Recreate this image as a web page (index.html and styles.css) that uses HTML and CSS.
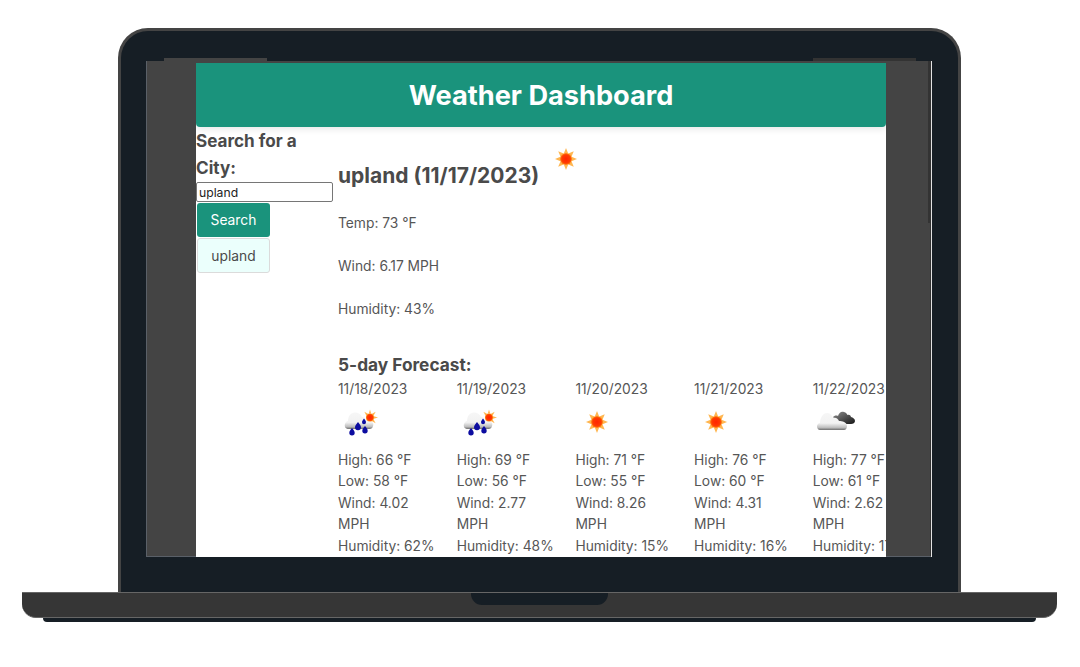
FILE: index.html
```html
<!DOCTYPE html>
<html lang="en">
  <head>
    <meta charset="UTF-8" />
    <title>Weather Dashboard</title>
    <link rel="stylesheet" href="styles.css">
  </head>
  <body>
    <svg class="icon-defs" aria-hidden="true">
      <defs>
        <radialGradient id="sun-disc">
          <stop offset="0" stop-color="#ff2400" />
          <stop offset="0.7" stop-color="#ff3c00" />
          <stop offset="1" stop-color="#ff8c10" />
        </radialGradient>
        <linearGradient id="cloud-white" x1="0" y1="0" x2="0" y2="1">
          <stop offset="0" stop-color="#f6f6f6" />
          <stop offset="0.6" stop-color="#f2f2f2" />
          <stop offset="0.85" stop-color="#c0c0c0" />
          <stop offset="1" stop-color="#6e6e6e" />
        </linearGradient>
        <linearGradient id="cloud-dark" x1="0" y1="0" x2="1" y2="1">
          <stop offset="0" stop-color="#8e8e8e" />
          <stop offset="1" stop-color="#161616" />
        </linearGradient>
        <symbol id="sun" viewBox="0 0 24 24">
          <g fill="#ffb650">
            <polygon points="12,1 9.800,6.500 14.200,6.500" />
            <polygon points="12,1 9.800,6.500 14.200,6.500" transform="rotate(45 12 12)" />
            <polygon points="12,1 9.800,6.500 14.200,6.500" transform="rotate(90 12 12)" />
            <polygon points="12,1 9.800,6.500 14.200,6.500" transform="rotate(135 12 12)" />
            <polygon points="12,1 9.800,6.500 14.200,6.500" transform="rotate(180 12 12)" />
            <polygon points="12,1 9.800,6.500 14.200,6.500" transform="rotate(225 12 12)" />
            <polygon points="12,1 9.800,6.500 14.200,6.500" transform="rotate(270 12 12)" />
            <polygon points="12,1 9.800,6.500 14.200,6.500" transform="rotate(315 12 12)" />
          </g>
          <circle cx="12" cy="12" r="6" fill="url(#sun-disc)" />
        </symbol>
        <symbol id="rain" viewBox="0 0 36 30">
          <g fill="#ffb650">
            <polygon points="26,1.500 24.800,5.500 27.200,5.500" />
            <polygon points="26,1.500 24.800,5.500 27.200,5.500" transform="rotate(45 26 9.500)" />
            <polygon points="26,1.500 24.800,5.500 27.200,5.500" transform="rotate(90 26 9.500)" />
            <polygon points="26,1.500 24.800,5.500 27.200,5.500" transform="rotate(135 26 9.500)" />
            <polygon points="26,1.500 24.800,5.500 27.200,5.500" transform="rotate(180 26 9.500)" />
            <polygon points="26,1.500 24.800,5.500 27.200,5.500" transform="rotate(315 26 9.500)" />
          </g>
          <path d="M5 21c-3 0-5-2-4-5 .500-2 2-3 3-3 0-5 3-8.500 7-8.500 3 0 6 2 7 4.500 2 0 3 1 3.500 2.500 3-.500 6.500 .500 7.500 3.500 1 3-1 6-3 6z" fill="url(#cloud-white)" />
          <circle cx="26" cy="9.500" r="4" fill="url(#sun-disc)" />
          <g fill="#0c0ca0">
            <path d="M8 20c1.500 2 2.700 3.200 2.700 4.700a2.700 2.700 0 0 1-5.400 0c0-1.500 1.200-2.700 2.700-4.700z" />
            <path d="M14 14c1.500 2 3 3.500 3 5.300a3 3 0 0 1-6 0c0-1.800 1.500-3.300 3-5.300z" />
            <path d="M20 10.500c1 1.500 2 2.500 2 3.700a2 2 0 0 1-4 0c0-1.200 1-2.200 2-3.700z" />
            <path d="M21 18c1.500 2 2.700 3.200 2.700 4.700a2.700 2.700 0 0 1-5.400 0c0-1.500 1.200-2.700 2.700-4.700z" />
          </g>
        </symbol>
        <symbol id="clouds" viewBox="0 0 38 24">
          <path d="M16 8c1-1 3-2 5-1 1-3 3-5 6-4 2 .500 3 2 3.500 3 2-.500 3 .500 3.500 2 2 .500 4 2 4 4s-2 3-4 3H22z" fill="url(#cloud-dark)" />
          <path d="M3 21c-2 0-3-2-3-3.500C0 16 1 14 3 14c0-5 3-10 7-10 3 0 5 2 6 5 3-1 5 .500 6 3 3 0 8 1 8 5 0 2-1 4-3 4z" fill="url(#cloud-white)" />
        </symbol>
      </defs>
    </svg>

    <div class="stage">
      <div class="lid">
        <div class="screen">
          <span class="tab tab-left"></span>
          <span class="tab tab-right"></span>
          <div class="page">
            <header class="hero">
              <h1>Weather Dashboard</h1>
            </header>
            <div class="columns">
              <aside class="sidebar">
                <h3>Search for a City:</h3>
                <input class="city-input" type="text" value="upland" />
                <button class="btn btn-search">Search</button>
                <button class="btn btn-history">upland</button>
              </aside>
              <main class="weather">
                <div class="today-title">
                  <h2>upland (11/17/2023)</h2>
                  <svg class="icon icon-today"><use href="#sun" /></svg>
                </div>
                <p>Temp: 73 °F</p>
                <p>Wind: 6.17 MPH</p>
                <p>Humidity: 43%</p>
                <h4>5-day Forecast:</h4>
                <div class="forecast">
                  <div class="day">
                    <div>11/18/2023</div>
                    <svg class="icon icon-rain"><use href="#rain" /></svg>
                    <div>High: 66 °F</div>
                    <div>Low: 58 °F</div>
                    <div>Wind: 4.02 MPH</div>
                    <div>Humidity: 62%</div>
                  </div>
                  <div class="day">
                    <div>11/19/2023</div>
                    <svg class="icon icon-rain"><use href="#rain" /></svg>
                    <div>High: 69 °F</div>
                    <div>Low: 56 °F</div>
                    <div>Wind: 2.77 MPH</div>
                    <div>Humidity: 48%</div>
                  </div>
                  <div class="day">
                    <div>11/20/2023</div>
                    <svg class="icon icon-sun"><use href="#sun" /></svg>
                    <div>High: 71 °F</div>
                    <div>Low: 55 °F</div>
                    <div>Wind: 8.26 MPH</div>
                    <div>Humidity: 15%</div>
                  </div>
                  <div class="day">
                    <div>11/21/2023</div>
                    <svg class="icon icon-sun"><use href="#sun" /></svg>
                    <div>High: 76 °F</div>
                    <div>Low: 60 °F</div>
                    <div>Wind: 4.31 MPH</div>
                    <div>Humidity: 16%</div>
                  </div>
                  <div class="day">
                    <div>11/22/2023</div>
                    <svg class="icon icon-clouds"><use href="#clouds" /></svg>
                    <div>High: 77 °F</div>
                    <div>Low: 61 °F</div>
                    <div>Wind: 2.62 MPH</div>
                    <div>Humidity: 17%</div>
                  </div>
                </div>
              </main>
            </div>
          </div>
        </div>
      </div>
      <div class="base">
        <div class="notch"></div>
      </div>
      <div class="foot"></div>
    </div>
  </body>
</html>
```

FILE: styles.css
```css
html,
body {
  margin: 0;
  padding: 0;
  height: 667px;
  overflow: hidden;
  background-color: #fff;
}

body {
  font-family: Inter, "Liberation Sans", sans-serif;
  font-size: 13.8px;
  line-height: 21.45px;
  color: #565656;
}

.icon-defs {
  display: block;
  width: 0;
  height: 0;
}

.stage {
  width: 1079px;
  padding-top: 28px;
  display: flex;
  flex-direction: column;
  align-items: center;
}

/* laptop */
.lid {
  width: 843px;
  height: 564px;
  box-sizing: border-box;
  padding: 30px 25px 0;
  background-color: #161e25;
  border: 3px solid #444;
  border-bottom: none;
  border-radius: 30px 30px 0 0;
}

.screen {
  position: relative;
  width: 786px;
  height: 496px;
  box-sizing: border-box;
  padding: 2px 45px 0 50px;
  background: linear-gradient(#333, #333) right top / 3px 162px no-repeat, #444;
  border-right: 1px solid #e4e4e4;
  box-shadow: inset 1px 0 0 #5a6068, inset 0 -1px 0 #5a6068, inset -1px 0 0 #333;
}

.tab {
  position: absolute;
  top: -3px;
  width: 103px;
  height: 3px;
}

.tab-left {
  left: 18px;
  background-color: #444;
}

.tab-right {
  right: 15px;
  background-color: #333;
}

.base {
  width: 1035px;
  height: 26px;
  box-sizing: border-box;
  display: flex;
  justify-content: center;
  background-color: #363636;
  border-top: 1px solid #666;
  border-bottom: 1px solid #666;
  border-radius: 0 0 14px 14px;
}

.notch {
  width: 137px;
  height: 12px;
  background-color: #161e25;
  border-radius: 0 0 11px 11px;
}

.foot {
  width: 993px;
  height: 4px;
  background-color: #161e25;
  border-radius: 0 0 6px 6px;
}

/* dashboard */
.page {
  height: 494px;
  overflow: hidden;
  background-color: #fff;
}

.hero {
  height: 64px;
  display: flex;
  align-items: center;
  justify-content: center;
  background-color: #1a937c;
  border-radius: 0 0 4px 4px;
  box-shadow: 0 2px 7px rgba(0, 0, 0, 0.1);
}

h1 {
  margin: 2px 0 0;
  font-size: 27.2px;
  line-height: 36px;
  font-weight: 700;
  color: #fff;
}

.columns {
  display: flex;
}

.sidebar {
  width: 142px;
  flex: none;
  display: flex;
  flex-direction: column;
  align-items: flex-start;
}

h3 {
  margin: 0 0 1px;
  width: 120px;
  font-size: 17.1px;
  line-height: 27px;
  font-weight: 700;
  color: #4a4a4a;
}

.city-input {
  width: 137px;
  height: 20px;
  box-sizing: border-box;
  margin: 0 0 1px;
  padding: 1px 2px;
  font-family: Inter, "Liberation Sans", sans-serif;
  font-size: 12.2px;
  color: #222;
  background-color: #fff;
  border: 1px solid #767676;
  border-radius: 2px;
}

.btn {
  box-sizing: border-box;
  margin-left: 1px;
  height: 35px;
  font-family: Inter, "Liberation Sans", sans-serif;
  font-size: 13.8px;
  border-radius: 3px;
  cursor: pointer;
}

.btn-search {
  width: 73px;
  height: 34px;
  color: #fff;
  background-color: #1a937c;
  border: none;
}

.btn-history {
  width: 73px;
  margin-top: 1px;
  color: #4a4a4a;
  background-color: #ebfffc;
  border: 1px solid #dbdbdb;
}

.weather {
  flex: 1;
  min-width: 0;
}

.today-title {
  height: 86px;
  display: flex;
  align-items: flex-start;
}

h2 {
  margin: 35px 0 0;
  font-size: 21px;
  line-height: 27px;
  font-weight: 700;
  color: #4a4a4a;
}

.icon {
  display: block;
  flex: none;
  filter: blur(0.35px);
}

.icon-today {
  width: 24px;
  height: 24px;
  margin: 20px 0 0 15px;
}

.weather p {
  margin: 0 0 21.45px;
}

h4 {
  margin: 32px 0 2px;
  font-size: 17.3px;
  line-height: 25px;
  font-weight: 700;
  color: #4a4a4a;
}

.forecast {
  display: flex;
  gap: 18.700px;
}

.day {
  width: 100px;
  flex: none;
}

.icon-rain {
  width: 36px;
  height: 30px;
  margin: 7px 0 12px 6px;
}

.icon-clouds {
  width: 38px;
  height: 24px;
  margin: 8px 0 17px 4px;
}

.icon-sun {
  width: 24px;
  height: 24px;
  margin: 9px 0 16px 10px;
}
```
